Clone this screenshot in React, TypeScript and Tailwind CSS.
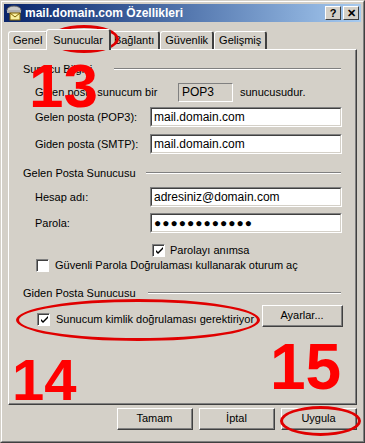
import React from "react";

const font = { fontFamily: '"Liberation Sans", Arial, sans-serif' };

const Sunken: React.FC<{ value: string; className?: string; dots?: boolean }> = ({ value, className, dots }) => (
  <div className={`h-[20px] border-t border-l border-t-[#808080] border-l-[#808080] border-b border-r border-b-white border-r-white ${className ?? ""}`}>
    <div className="h-full border-t border-l border-t-[#404040] border-l-[#404040] border-b border-r border-b-[#d4d0c8] border-r-[#d4d0c8] bg-white px-[2px] flex items-center text-[12px] text-black">
      {dots ? <span className="tracking-[1px] text-[12px]">●●●●●●●●●●●●</span> : value}
    </div>
  </div>
);

const Check: React.FC<{ checked?: boolean; className?: string }> = ({ checked, className }) => (
  <div className={`w-[13px] h-[13px] border-t border-l border-t-[#808080] border-l-[#808080] border-b border-r border-b-white border-r-white shrink-0 ${className ?? ""}`}>
    <div className="w-full h-full border-t border-l border-t-[#404040] border-l-[#404040] bg-white flex items-center justify-center">
      {checked && (
        <svg width="9" height="9" viewBox="0 0 9 9">
          <path d="M1 4 L3 6 L8 1 L8 3 L3 8 L1 6 Z" fill="#000" />
        </svg>
      )}
    </div>
  </div>
);

const Btn: React.FC<{ label: string; className?: string }> = ({ label, className }) => (
  <div className={`h-[22px] border-t border-l border-t-white border-l-white border-b border-r border-b-[#404040] border-r-[#404040] ${className ?? ""}`}>
    <div className="h-full border-b border-r border-b-[#808080] border-r-[#808080] flex items-center justify-center text-[11px] text-black">
      {label}
    </div>
  </div>
);

const Section: React.FC<{ title: string; lineStart: string }> = ({ title, lineStart }) => (
  <div className="flex items-center h-[14px]">
    <span className="text-[11px] text-black">{title}</span>
    <div className={`flex-1 ${lineStart} mr-[2px] border-t border-t-[#808080] border-b border-b-white`} />
  </div>
);

const Row: React.FC<{ label: string; value: string; dots?: boolean }> = ({ label, value, dots }) => (
  <div className="flex items-center h-[20px]">
    <span className="w-[127px] pl-[12px] text-[11px] text-black">{label}</span>
    <Sunken value={value} dots={dots} className="w-[192px]" />
  </div>
);

const Tab: React.FC<{ label: string; active?: boolean }> = ({ label, active }) => (
  <div
    className={`relative border-t border-l border-t-white border-l-white border-r-2 border-r-[#404040] rounded-t-[3px] flex items-center text-[11px] text-black ${
      active ? "h-[21px] -mx-[2px] z-10 bg-[#d4d0c8] -mb-[1px] px-[6px]" : "h-[18px] px-[4px]"
    }`}
  >
    {label}
  </div>
);

const TitleBtn: React.FC<{ children: React.ReactNode }> = ({ children }) => (
  <div className="w-[16px] h-[14px] bg-[#d4d0c8] border border-t-white border-l-white border-b-[#404040] border-r-[#404040] flex items-center justify-center text-[11px] font-bold text-black leading-none">
    {children}
  </div>
);

export default function App() {
  return (
    <div style={font} className="relative w-[365px] h-[443px] bg-[#d4d0c8] border border-[#d4d0c8] border-r-[#404040] border-b-[#404040] overflow-hidden whitespace-nowrap">
      <div className="h-full border border-white border-r-[#808080] border-b-[#808080] p-[2px] flex flex-col">
        {/* title bar */}
        <div className="h-[18px] bg-gradient-to-r from-[#0a246a] to-[#a6caf0] flex items-center pl-[2px] pr-[2px]">
          <svg width="16" height="16" viewBox="0 0 16 16" className="mr-[3px]">
            <ellipse cx="8" cy="5" rx="7" ry="4" fill="#c8c8c8" stroke="#606060" />
            <rect x="1" y="5" width="14" height="3" fill="#b0b0b0" />
            <rect x="4" y="8" width="10" height="7" fill="#f8f0a0" stroke="#806000" />
            <path d="M4 8 L9 12 L14 8" fill="none" stroke="#806000" />
          </svg>
          <span className="text-white font-bold text-[12px] flex-1">mail.domain.com Özellikleri</span>
          <div className="flex gap-[2px]">
            <TitleBtn>?</TitleBtn>
            <TitleBtn>✕</TitleBtn>
          </div>
        </div>
        {/* tabs */}
        <div className="flex items-end mt-[5px] ml-[4px] h-[22px]">
          <Tab label="Genel" />
          <Tab label="Sunucular" active />
          <Tab label="Bağlantı" />
          <Tab label="Güvenlik" />
          <Tab label="Gelişmiş" />
        </div>
        {/* panel */}
        <div className="mx-[4px] h-[356px] border-t border-l border-t-white border-l-white border-b border-r border-b-[#404040] border-r-[#404040]">
          <div className="h-full border-b border-r border-b-[#808080] border-r-[#808080] pl-[14px] pr-[12px] pt-[12px] flex flex-col">
            <Section title="Sunucu Bilgisi" lineStart="ml-[22px]" />
            <div className="flex items-center h-[20px] mt-[6px]">
              <span className="w-[155px] pl-[12px] text-[11px] text-black">Gelen posta sunucum bir</span>
              <div className="w-[55px] h-[19px] border border-t-[#808080] border-l-[#808080] border-b-white border-r-white flex items-center px-[3px] text-[12px] text-black">
                POP3
              </div>
              <span className="ml-[7px] text-[11px] text-black">sunucusudur.</span>
            </div>
            <div className="mt-[5px] flex flex-col gap-[7px]">
              <Row label="Gelen posta (POP3):" value="mail.domain.com" />
              <Row label="Giden posta (SMTP):" value="mail.domain.com" />
            </div>
            <div className="mt-[12px]">
              <Section title="Gelen Posta Sunucusu" lineStart="ml-[10px]" />
            </div>
            <div className="mt-[7px] flex flex-col gap-[6px]">
              <Row label="Hesap adı:" value="adresiniz@domain.com" />
              <Row label="Parola:" value="" dots />
            </div>
            <div className="flex items-center h-[14px] mt-[10px] ml-[129px]">
              <Check checked />
              <span className="ml-[5px] text-[11px] text-black">Parolayı anımsa</span>
            </div>
            <div className="flex items-center h-[14px] mt-[1px] ml-[13px]">
              <Check />
              <span className="ml-[6px] text-[11px] text-black">Güvenli Parola Doğrulaması kullanarak oturum aç</span>
            </div>
            <div className="mt-[14px]">
              <Section title="Giden Posta Sunucusu" lineStart="ml-[12px]" />
            </div>
            <div className="flex items-start mt-[5px]">
              <div className="flex items-center ml-[14px] mt-[6px] flex-1">
                <Check checked />
                <span className="ml-[6px] text-[11px] text-black">Sunucum kimlik doğrulaması gerektiriyor</span>
              </div>
              <Btn label="Ayarlar..." className="w-[81px] h-[21px]" />
            </div>
          </div>
        </div>
        {/* buttons */}
        <div className="flex justify-end gap-[6px] mt-[3px] mr-[4px]">
          <Btn label="Tamam" className="w-[76px]" />
          <Btn label="İptal" className="w-[76px]" />
          <Btn label="Uygula" className="w-[76px]" />
        </div>
      </div>

      {/* red annotations */}
      <div className="absolute left-[48px] top-[24px] w-[70px] h-[28px] border-[3px] border-[#e00000] rounded-[50%]" />
      <div className="absolute left-[15px] top-[298px] w-[244px] h-[42px] border-[3px] border-[#e00000] rounded-[50%]" />
      <div className="absolute left-[279px] top-[405px] w-[81px] h-[30px] border-[3px] border-[#e00000] rounded-[50%]" />
      <div className="absolute left-[28px] top-[54px] text-[62px] font-bold text-[#ff0000] leading-none">13</div>
      <div className="absolute left-[11px] top-[350px] text-[58px] font-bold text-[#ff0000] leading-none">14</div>
      <div className="absolute left-[269px] top-[334px] text-[64px] font-bold text-[#ff0000] leading-none">15</div>
    </div>
  );
}
